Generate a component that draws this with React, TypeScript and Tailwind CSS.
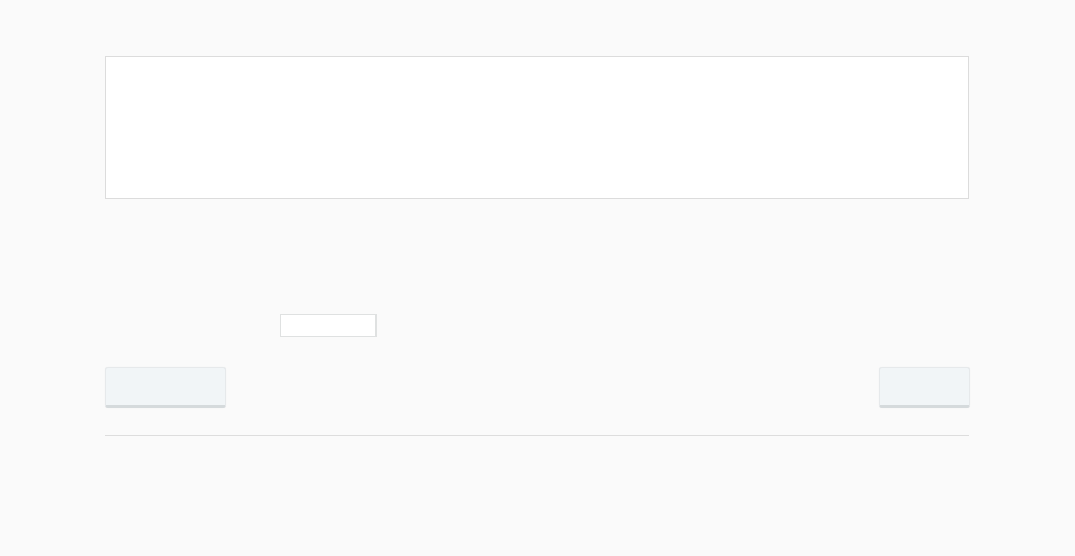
import React from "react";

export default function App() {
  return (
    <div className="min-h-[556px] w-full bg-[#fafafa]" style={{ fontFamily: '"Liberation Sans", Arial, sans-serif' }}>
      <div className="ml-[105px] w-[864px] pt-[56px]">
        <div className="h-[143px] w-full border border-[#dcdcdc] bg-white" />
        <div className="flex h-[138px] items-end pl-[175px]">
          <div className="h-[23px] w-[97px] border border-[#dfe1e1] border-r-[2px] bg-white" />
        </div>
        <div className="mt-[30px] flex justify-between">
          <div className="h-[41px] w-[121px] rounded-[3px] border border-[#e6e9eb] border-b-[3px] border-b-[#d5dadc] bg-[#f1f5f7] shadow-[0_0_1px_rgba(0,0,0,0.08)]" />
          <div className="-mr-px h-[41px] w-[91px] rounded-[3px] border border-[#e6e9eb] border-b-[3px] border-b-[#d5dadc] bg-[#f1f5f7] shadow-[0_0_1px_rgba(0,0,0,0.08)]" />
        </div>
        <div className="mt-[27px] h-px w-full bg-[#dddddd]" />
      </div>
    </div>
  );
}
